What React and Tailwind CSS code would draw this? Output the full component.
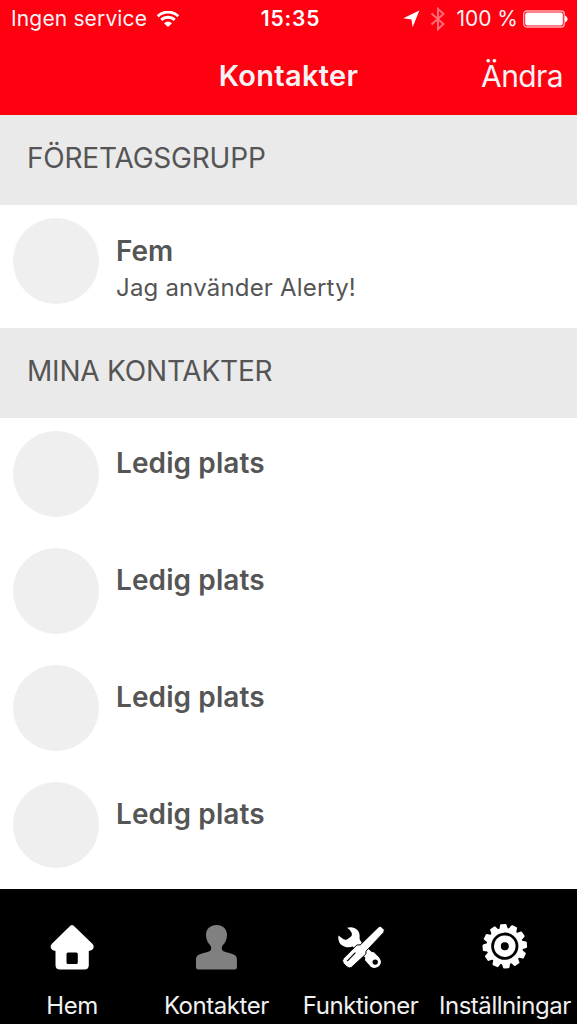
import React from "react";

const slots = ["Ledig plats", "Ledig plats", "Ledig plats", "Ledig plats"];
const teeth = [0, 30, 60, 90, 120, 150, 180, 210, 240, 270, 300, 330];

function WifiIcon() {
  return (
    <svg className="ml-2.5 h-4 w-[22px]" viewBox="0 0 22 16" fill="none" stroke="#fff" strokeWidth="2.9">
      <path d="M.8 5.2a14.6 14.6 0 0 1 20.4 0" />
      <path d="M4.3 8.9a9.6 9.6 0 0 1 13.4 0" />
      <path d="M7 12.2a5.6 5.6 0 0 1 8 0L11 16Z" fill="#fff" stroke="none" />
    </svg>
  );
}

function HomeIcon() {
  return (
    <svg className="h-12 w-12" viewBox="0 0 48 48" fill="#fff">
      <path
        fillRule="evenodd"
        d="M22.3 2.8Q24 1.2 25.7 2.8L44.6 21.1Q46.2 22.8 45.5 24.8Q44.7 27.5 40.8 28V42Q40.8 46.5 36.3 46.5H12Q7.5 46.5 7.5 42V28Q3.8 27.6 2.8 24.8Q2.1 22.8 3.7 21.1ZM20 29.5Q18.5 29.5 18.5 31V39.5Q18.5 41 20 41H28.3Q29.8 41 29.8 39.5V31Q29.8 29.5 28.3 29.5Z"
      />
    </svg>
  );
}

function PersonIcon() {
  return (
    <svg className="h-12 w-12" viewBox="0 0 48 48" fill="#808080">
      <path d="M24.5 2C18 2 14 6.2 14 12.2C14 17 16.2 20 18.2 22.3C19.7 24.1 19.6 26.7 18 28C13.3 30.7 4 29.7 4 36V44Q4 46.5 6.5 46.5H42.4Q44.9 46.5 44.9 44V36C44.9 29.7 35.7 30.7 31 28C29.4 26.7 29.3 24.1 30.8 22.3C32.8 20 35 17 35 12.2C35 6.2 31 2 24.5 2Z" />
    </svg>
  );
}

function ToolsIcon() {
  return (
    <svg className="h-12 w-12" viewBox="0 0 48 48" fill="#fff">
      <path d="M10 4.7C17 2.5 22.7 7 22.6 12.4Q22.1 16 23.6 18L25 20L18 25.6L15.7 23.5C9.4 26 2.3 22.3 1.6 17Q1 14.7 1.5 12.4L6.2 16Q8.2 17.5 10.4 16.2L13.8 13.8Q15.8 12.2 14.6 9.8Q13 6.3 10 4.7Z" />
      <path d="M26.4 29.9L30.9 25.4L34.7 29L36.8 29.3L42.1 34.5Q45.3 39 42.8 42.2Q39 46.8 33.8 43.7L28 37.3L28.2 34.5L26.4 32.7Z" />
      <circle cx="38.2" cy="39.1" r="2.7" fill="#000" />
      <path
        stroke="#000"
        strokeWidth="1"
        d="M41.6 3.9L43.6 3.2L47.4 6.7L46.7 9.5L29 28.2L28.9 31L14.7 44.2Q12.3 45.9 10 43.9L6.3 40.2Q4.6 37.7 6.5 35.3L19.8 22L23.4 21.8Z"
      />
      <path d="M10.2 38.1L18.4 29.7" fill="none" stroke="#000" strokeWidth="1.2" />
    </svg>
  );
}

function GearIcon() {
  return (
    <svg className="h-12 w-12" viewBox="0 0 48 48">
      <g transform="translate(23.8 23.2) rotate(-4)" fill="#fff">
        <circle r="18.3" />
        {teeth.map((a) => (
          <path key={a} transform={`rotate(${a})`} d="M-4.5 -16L-3.2 -21.4Q-3 -22.2 -2.2 -22.2H2.2Q3 -22.2 3.2 -21.4L4.5 -16Z" />
        ))}
        <circle r="12.2" fill="none" stroke="#000" strokeWidth="2.8" />
        <circle r="4" fill="#000" />
      </g>
    </svg>
  );
}

function SectionHeader({ children }) {
  return (
    <h2 className="h-[90px] shrink-0 bg-[#eaeaea] pt-[23px] pl-[27px] text-[28px] leading-10 font-normal tracking-[-0.2px] text-[#555]">
      {children}
    </h2>
  );
}

function Avatar() {
  return <div className="size-[86px] shrink-0 rounded-full bg-[#efefef]" />;
}

function Tab({ icon, label }) {
  return (
    <div className="flex w-1/4 flex-col items-center pt-[34px] text-[#f1f1f1]">
      {icon}
      <span className="mt-5 text-[24px] leading-[30px] tracking-[-0.45px] whitespace-nowrap">{label}</span>
    </div>
  );
}

export default function App() {
  return (
    <div className="flex h-[1024px] w-[577px] flex-col overflow-hidden bg-white font-['Inter','Liberation_Sans',sans-serif] text-[#555]">
      <header className="h-[115px] shrink-0 bg-[#ff0011] text-[#f4f4f4]">
        <div className="grid h-[38px] grid-cols-[1fr_auto_1fr] items-center text-[21px]">
          <div className="flex items-center pl-[11px]">
            <span className="tracking-[0.15px]">Ingen service</span>
            <WifiIcon />
          </div>
          <span className="pl-1 text-[21px] font-semibold tracking-[0.8px] text-white">15:35</span>
          <div className="flex items-center justify-end pr-[9px]">
            <svg className="h-[18px] w-[17px]" viewBox="0 0 17 18" fill="#fff">
              <path d="M16.4.6L9.6 17.2L8.5 9.4L.3 8.2Z" />
            </svg>
            <svg className="ml-2.5 h-6 w-4" viewBox="0 0 16 24" fill="none" stroke="#ff6b76" strokeWidth="2">
              <path d="M1.5 6.5L13.5 17L8 22.2V1.8L13.5 7L1.5 17.5" />
            </svg>
            <span className="ml-2.5 whitespace-nowrap">100 %</span>
            <svg className="ml-[5px] h-[18px] w-[45px]" viewBox="0 0 45 18">
              <rect x=".7" y="1" width="40.6" height="16" rx="3" fill="none" stroke="#ffb0b5" strokeWidth="1.3" />
              <rect x="2.2" y="2.5" width="37.6" height="13" rx="2" fill="#fff" />
              <path d="M42 5.5Q44.6 6.5 44.6 9T42 12.5Z" fill="#fff" />
            </svg>
          </div>
        </div>
        <div className="grid h-[76px] grid-cols-[1fr_auto_1fr] items-center text-[29px]">
          <span />
          <h1 className="font-semibold tracking-[0.3px]">Kontakter</h1>
          <span className="pr-[14px] text-right text-[30px] tracking-[-0.6px]">Ändra</span>
        </div>
      </header>

      <SectionHeader>FÖRETAGSGRUPP</SectionHeader>
      <div className="flex h-[123px] shrink-0 gap-[17px] pt-[13px] pl-[13px]">
        <Avatar />
        <div className="pt-[15px]">
          <h3 className="text-[28px] leading-9 font-semibold">Fem</h3>
          <p className="text-[24px] leading-[37px] tracking-[0.2px]">Jag använder Alerty!</p>
        </div>
      </div>

      <SectionHeader>MINA KONTAKTER</SectionHeader>
      <ul className="flex-1 overflow-hidden">
        {slots.map((name, i) => (
          <li key={i} className="flex h-[117px] gap-[17px] pt-[13px] pl-[13px]">
            <Avatar />
            <h3 className="pt-3.5 text-[28px] leading-9 font-semibold tracking-[0.1px]">{name}</h3>
          </li>
        ))}
      </ul>

      <nav className="flex h-[135px] shrink-0 bg-black">
        <Tab icon={<HomeIcon />} label="Hem" />
        <Tab icon={<PersonIcon />} label="Kontakter" />
        <Tab icon={<ToolsIcon />} label="Funktioner" />
        <Tab icon={<GearIcon />} label="Inställningar" />
      </nav>
    </div>
  );
}
